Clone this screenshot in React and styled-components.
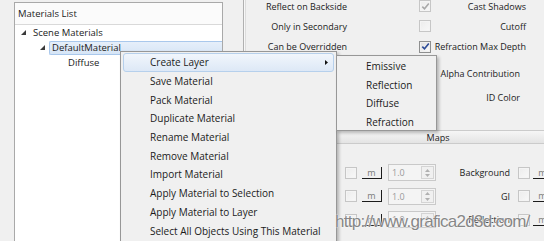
import React from 'react';
import styled, { createGlobalStyle } from 'styled-components';

const GlobalStyle = createGlobalStyle`
  html, body {
    margin: 0;
    padding: 0;
    background: #f0f0f0;
  }
  * {
    box-sizing: border-box;
  }
`;

const menuItems = [
  { label: 'Create Layer', active: true, sub: true },
  { label: 'Save Material' },
  { label: 'Pack Material' },
  { label: 'Duplicate Material' },
  { label: 'Rename Material' },
  { label: 'Remove Material' },
  { label: 'Import Material' },
  { label: 'Apply Material to Selection' },
  { label: 'Apply Material to Layer' },
  { label: 'Select All Objects Using This Material' },
];

const subItems = ['Emissive', 'Reflection', 'Diffuse', 'Refraction'];

const props = [
  { left: 'Reflect on Backside', checked: true, disabled: true, right: 'Cast Shadows', h: 20 },
  { left: 'Only in Secondary', checked: false, disabled: true, right: 'Cutoff', h: 20 },
  { left: 'Can be Overridden', checked: true, disabled: false, right: 'Refraction Max Depth', h: 21 },
  { right: 'Alpha Contribution', inset: 6, h: 32 },
  { right: 'ID Color', inset: 6, h: 16 },
];

const maps = ['Background', 'GI', 'Reflection'];

const Page = styled.div`
  position: relative;
  width: 544px;
  height: 241px;
  overflow: hidden;
  display: flex;
  align-items: flex-start;
  padding: 2px 0 0 14px;
  background: #f0f0f0;
  font-family: "Open Sans", "Noto Sans", sans-serif;
  font-size: 10px;
  color: #1b1b1b;
`;

const ListPanel = styled.section`
  flex: 0 0 209px;
  height: 260px;
  background: #fff;
  border: 1px solid #a9a9a9;
  font-size: 9.5px;
`;

const ListHeader = styled.div`
  height: 22px;
  display: flex;
  align-items: center;
  padding-left: 3px;
  background: #fbfbfb;
  border-bottom: 1px solid #d9d9d9;
`;

const TreeRow = styled.div`
  height: 15px;
  display: flex;
  align-items: center;
  padding-left: ${p => p.$indent}px;
`;

const Expander = styled.svg`
  width: 5px;
  height: 5px;
  margin-right: 4px;
  flex-shrink: 0;
`;

const TreeLabel = styled.span`
  flex: 1;
  height: 14px;
  display: flex;
  align-items: center;
  padding-left: 2px;
  border: 1px solid ${p => (p.$selected ? '#a9c8ec' : 'transparent')};
  border-right: none;
  border-radius: 2px 0 0 2px;
  background: ${p => (p.$selected ? 'linear-gradient(#e6effa, #d6e5f6)' : 'transparent')};
`;

const Splitter = styled.div`
  flex: 0 0 3px;
  height: 260px;
  margin: -2px 0 0 20px;
  border-left: 1px solid #b0b0b0;
  border-right: 1px solid #dcdcdc;
  background: #f7f7f7;
`;

const Props = styled.div`
  flex: 0 0 380px;
  margin-top: -6px;
  font-size: 9px;
`;

const PropGrid = styled.div`
  display: grid;
  grid-template-columns: 101px 84px 95px;
  grid-template-rows: ${p => p.$rows};
  align-items: center;
`;

const PropLabel = styled.span`
  text-align: right;
  white-space: nowrap;
  padding-right: ${p => p.$inset || 0}px;
`;

const Box = styled.span`
  width: 12px;
  height: 12px;
  display: inline-flex;
  align-items: center;
  justify-content: center;
  justify-self: end;
  flex-shrink: 0;
  border: 1px solid ${p => (p.$disabled ? '#c6c6c6' : '#8e8f8f')};
  background: ${p => (p.$disabled ? 'linear-gradient(135deg, #ececec, #f8f8f8)' : 'linear-gradient(135deg, #dcdcdc, #fdfdfd)')};
  box-shadow: inset 0 0 0 1px ${p => (p.$disabled ? '#f4f4f4' : '#f0f0f0')};
`;

const MapsBar = styled.div`
  height: 14px;
  margin: 25px 0 0 4px;
  display: flex;
  align-items: center;
  justify-content: center;
  background: linear-gradient(#f6f6f6, #e4e4e4);
  border: 1px solid #cbcbcb;
  border-left: none;
  border-right: none;
`;

const MapList = styled.div`
  padding-top: 17px;
`;

const MapRow = styled.div`
  height: 23.5px;
  display: flex;
  align-items: center;
  padding-left: 99px;
`;

const MapButton = styled.span`
  width: 20px;
  height: 12px;
  margin-left: ${p => p.$gap}px;
  display: inline-flex;
  align-items: center;
  justify-content: center;
  color: #7a7a7a;
  font-size: 9px;
  border-bottom: 1px solid #1c1c1c;
  border-right: 1px solid #1c1c1c;
  flex-shrink: 0;
`;

const Spinner = styled.span`
  width: 48px;
  height: 17px;
  margin-left: 6px;
  display: flex;
  align-items: center;
  border: 1px solid #c9c9c9;
  background: #f4f4f4;
  color: #9a9a9a;
  flex-shrink: 0;
`;

const SpinValue = styled.span`
  flex: 1;
  padding-left: 3px;
`;

const SpinArrows = styled.span`
  width: 13px;
  height: 13px;
  margin-right: 1px;
  display: flex;
  flex-direction: column;
  border: 1px solid #d4d4d4;
  background: #f0f0f0;
`;

const SpinHalf = styled.span`
  flex: 1;
  display: flex;
  align-items: center;
  justify-content: center;
`;

const MapLabel = styled.span`
  width: 74px;
  text-align: right;
  margin-right: 8px;
  flex-shrink: 0;
`;

const Menu = styled.div`
  position: absolute;
  left: 120px;
  top: 51px;
  width: 217px;
  height: 210px;
  padding: 1px 2px;
  background: #f0f0f0;
  border: 1px solid #979797;
  box-shadow: 2px 2px 3px rgba(0, 0, 0, 0.25);
`;

const SubMenu = styled(Menu)`
  left: 336px;
  top: 55px;
  width: 101px;
  height: 76px;
`;

const MenuItem = styled.div`
  height: ${p => p.$h}px;
  display: flex;
  align-items: center;
  padding: 0 5px 0 26px;
  border: 1px solid ${p => (p.$active ? '#b6d0ec' : 'transparent')};
  border-radius: 3px;
  background: ${p => (p.$active ? 'linear-gradient(#f1f6fc, #dde8f6)' : 'transparent')};
  white-space: nowrap;
`;

const ItemText = styled.span`
  flex: 1;
`;

const Watermark = styled.div`
  position: absolute;
  left: 335px;
  top: 212px;
  font-family: "Liberation Sans", Arial, sans-serif;
  font-size: 17px;
  letter-spacing: -0.7px;
  color: #878787;
  text-shadow: 0 0 1px #fff, 0 0 2px #fff;
  white-space: nowrap;
`;

const Triangle = () => (
  <Expander viewBox="0 0 5 5">
    <polygon points="5,0 5,5 0,5" fill="#3a3a3a" />
  </Expander>
);

const Check = ({ disabled }) => (
  <svg width="9" height="9" viewBox="0 0 9 9">
    <path d="M1.3 4.6 L3.5 6.8 L7.8 1.6" fill="none" stroke={disabled ? '#a9a9a9' : '#2c4b97'} strokeWidth="1.6" />
  </svg>
);

const CheckBox = ({ checked, disabled }) => (
  <Box $disabled={disabled}>{checked && <Check disabled={disabled} />}</Box>
);

const Arrow = ({ up }) => (
  <svg width="5" height="3" viewBox="0 0 5 3">
    <polygon points={up ? '2.5,0 5,3 0,3' : '0,0 5,0 2.5,3'} fill="#b0b0b0" />
  </svg>
);

export default function App() {
  return (
    <>
      <GlobalStyle />
      <Page>
        <ListPanel>
          <ListHeader>Materials List</ListHeader>
          <TreeRow $indent={6}>
            <Triangle />
            <TreeLabel>Scene Materials</TreeLabel>
          </TreeRow>
          <TreeRow $indent={25}>
            <Triangle />
            <TreeLabel $selected>DefaultMaterial</TreeLabel>
          </TreeRow>
          <TreeRow $indent={50}>
            <TreeLabel>Diffuse</TreeLabel>
          </TreeRow>
        </ListPanel>
        <Splitter />
        <Props>
          <PropGrid $rows={props.map(r => r.h + 'px').join(' ')}>
            {props.map((row, i) => (
              <React.Fragment key={i}>
                <PropLabel>{row.left}</PropLabel>
                {row.left ? <CheckBox checked={row.checked} disabled={row.disabled} /> : <span />}
                <PropLabel $inset={row.inset}>{row.right}</PropLabel>
              </React.Fragment>
            ))}
          </PropGrid>
          <MapsBar>Maps</MapsBar>
          <MapList>
            {maps.map(name => (
              <MapRow key={name}>
                <CheckBox disabled />
                <MapButton $gap={5}>m</MapButton>
                <Spinner>
                  <SpinValue>1.0</SpinValue>
                  <SpinArrows>
                    <SpinHalf><Arrow up /></SpinHalf>
                    <SpinHalf><Arrow /></SpinHalf>
                  </SpinArrows>
                </Spinner>
                <MapLabel>{name}</MapLabel>
                <CheckBox disabled />
                <MapButton $gap={3}>m</MapButton>
              </MapRow>
            ))}
          </MapList>
        </Props>
        <Menu>
          {menuItems.map(item => (
            <MenuItem key={item.label} $h={18.7} $active={item.active}>
              <ItemText>{item.label}</ItemText>
              {item.sub && (
                <svg width="3" height="5" viewBox="0 0 3 5">
                  <polygon points="0,0 3,2.5 0,5" fill="#111" />
                </svg>
              )}
            </MenuItem>
          ))}
        </Menu>
        <SubMenu>
          {subItems.map(label => (
            <MenuItem key={label} $h={18.5}>{label}</MenuItem>
          ))}
        </SubMenu>
        <Watermark>http://www.grafica2d3d.com/</Watermark>
      </Page>
    </>
  );
}
